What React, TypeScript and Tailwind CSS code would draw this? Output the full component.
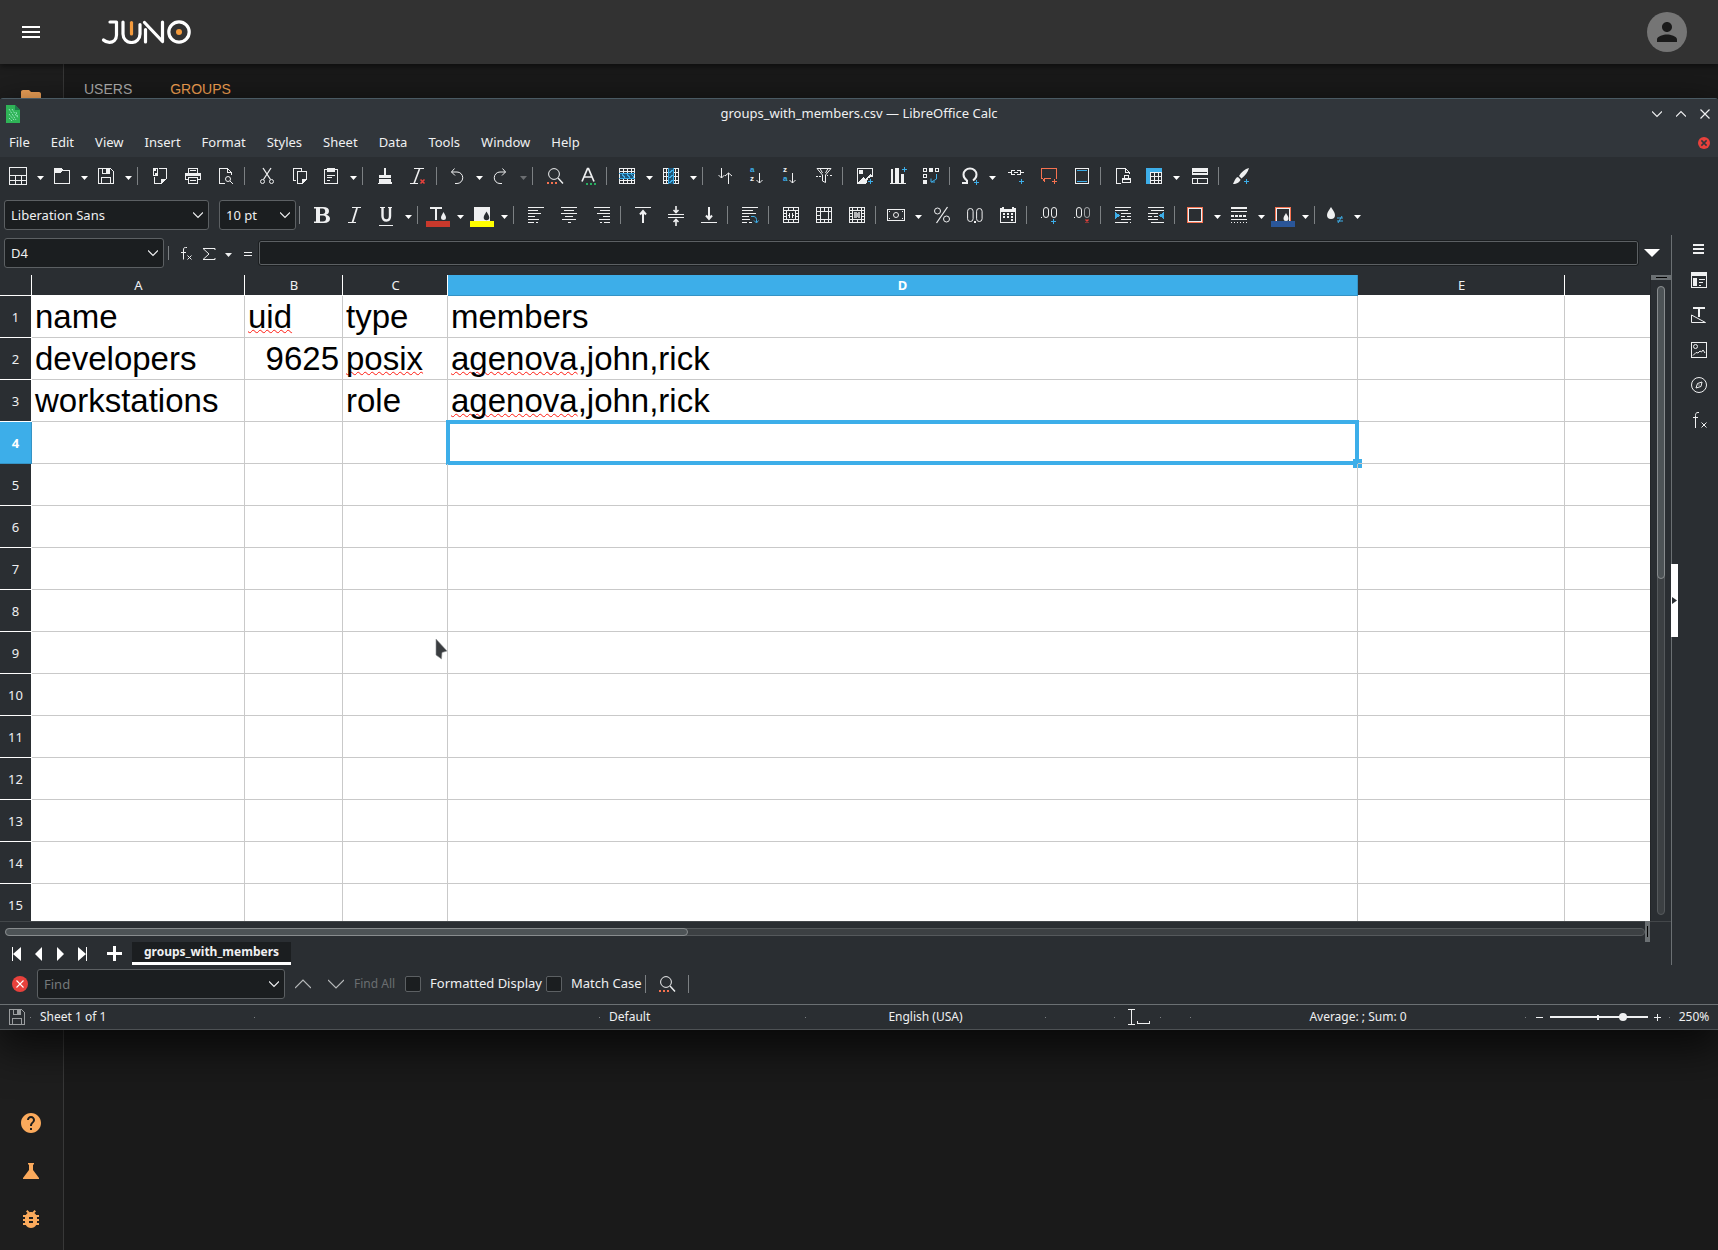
import type { ReactNode } from "react";
import { MdBugReport, MdFolder, MdHelp, MdMenu, MdPerson } from "react-icons/md";

const BLUE = "#3daee9";
const ORANGE = "#f67250";
const RED = "#e8413c";

//    Small blue "add" mark in the corner of an icon
const Plus = ({ x = 11, y = 11, color = BLUE }: { x?: number; y?: number; color?: string }) => (
  <path d={`M${x} ${y + 2.5}h5M${x + 2.5} ${y}v5`} stroke={color} fill="none" />
);

const Letter = ({ y, color, children }: { y: number; color: string; children: string }) => (
  <text x="0" y={y} fontSize="8" fontFamily="Liberation Sans" fontWeight="700" fill={color} stroke="none">
    {children}
  </text>
);

const icons: Record<string, ReactNode> = {
  new: <path d="M-.5-.5h17v17h-17zM-.5 7.5h17M-.5 12.5h17M5.5 7v9.500M11.500 7v9.500" />,
  open: (
    <>
      <path d="M0 0h7l2 2h7v1H8L6.500 5H0z" fill="currentColor" stroke="none" />
      <path d="M.5 4v11.500h15v-13" />
    </>
  ),
  save: (
    <>
      <path d="M.5.5h12l3 3v12H.5zM3.500 15.500v-6h9v6M4.500.5v5h7v-5" />
      <path d="M8 1h3v4H8z" fill="currentColor" stroke="none" />
    </>
  ),
  export: (
    <>
      <path d="M7 .5h7.500v10M2.500 9v6.500h7" />
      <path d="M9 16v-5h6zM1 0h5v8H1z" fill="currentColor" stroke="none" />
      <path d="M2 7l1-4 1 2 1-4" stroke="#2a2e32" />
    </>
  ),
  print: (
    <>
      <path d="M3.500 5V.5h9V5M3.500 11.500h-3v-6h15v6h-3M3.500 9.500h9v6h-9zM5 2.500h6M5 12.500h6" />
      <path d="M1 6h14v2H1z" fill="currentColor" stroke="none" />
    </>
  ),
  preview: (
    <>
      <path d="M7 15.500H1.500V.5h8l4 4V7M9.500.5v4h4" />
      <g shapeRendering="auto">
        <circle cx="10" cy="11" r="2.500" />
        <path d="M12 13l3 3" />
      </g>
    </>
  ),
  cut: (
    <g shapeRendering="auto">
      <path d="M4 0l7.500 11.500M12 0L4.500 11.500" strokeWidth="1.300" />
      <circle cx="3.500" cy="13.500" r="2" />
      <circle cx="12.500" cy="13.500" r="2" />
    </g>
  ),
  copy: (
    <>
      <path d="M3.500 12.500h-2V.5h8v2M5.500 3.500h9V11l-4 4.500h-5z" />
      <path d="M10 16v-5h5z" fill="currentColor" stroke="none" />
    </>
  ),
  paste: (
    <>
      <path d="M1.500 1.500h13v14h-13zM4 7.500h8M4 9.500h5M4 12.500h3" />
      <path d="M4 0h8v4H4z" fill="currentColor" stroke="none" />
    </>
  ),
  clone: <path d="M7 0h2v7h5v3H2V7h5zM2 11h12l1 5H1c1-1 1-3 1-5z" fill="currentColor" stroke="none" />,
  clear: (
    <>
      <path d="M4 .5h10M0 15.500h8" />
      <path d="M9.500 1L4 15.500" strokeWidth="1.600" shapeRendering="auto" />
      <path d="M10.500 11.500l4 4M14.500 11.500l-4 4" stroke={RED} strokeWidth="1.600" shapeRendering="auto" />
    </>
  ),
  undo: <path d="M5.500.5L2.500 4l3.500 3.500M2.500 4H8a5.700 5.700 0 0 1 0 11.500H6" shapeRendering="auto" />,
  redo: <path d="M9.500.5l3 3.500L9 7.500M12.500 4H7a5.700 5.700 0 0 0 0 11.500h2" shapeRendering="auto" />,
  find: (
    <>
      <g shapeRendering="auto">
        <circle cx="7" cy="6" r="5.400" />
        <path d="M11 10l5 5.500" strokeWidth="1.400" />
      </g>
      <path d="M0 15h2M4 15h2M8 15h2" stroke={ORANGE} strokeWidth="2" />
    </>
  ),
  spell: (
    <>
      <path d="M2 13.500L7.500.7h1l5.500 12.800M4 9h8" strokeWidth="1.700" shapeRendering="auto" />
      <path d="M6 15.500h2M10 15.500h2M14 15.500h2" stroke="#27ae60" strokeWidth="2" />
    </>
  ),
  row: (
    <>
      <path d="M.5.5h15v15H.5zM.5 3.500h15M.5 12.500h15M4.500 0v16M8.500 0v16M12.500 0v16" />
      <path d="M1 5h14v6H1z" fill="#1d5578" stroke="none" />
      <path d="M0 5.500h16M0 10.500h16M2 5l5 6M7 5l5 6M12 5l3 5" stroke={BLUE} />
    </>
  ),
  column: (
    <>
      <path d="M.5.5h15v15H.5zM3.500 0v16M12.500 0v16M0 4.500h16M0 8.500h16M0 12.500h16" />
      <path d="M5 0h6v16H5z" fill="#1d5578" stroke="none" />
      <path d="M5.500 0v16M10.500 0v16M5 6l6-5M5 11l6-5M5 16l6-5" stroke={BLUE} />
    </>
  ),
  sort: <path d="M4.500 0v10M1.500 7l3 3 3-3M11.500 16V5M8 8l3.500-3L15 8" shapeRendering="auto" />,
  sortAsc: (
    <>
      <path d="M9.500 5v10M6.500 12l3 3 3-3" shapeRendering="auto" />
      <Letter y={4} color={BLUE}>a</Letter>
      <Letter y={13} color="currentColor">z</Letter>
    </>
  ),
  sortDesc: (
    <>
      <path d="M9.500 5v10M6.500 12l3 3 3-3" shapeRendering="auto" />
      <Letter y={4} color="currentColor">z</Letter>
      <Letter y={13} color={BLUE}>a</Letter>
    </>
  ),
  filter: (
    <>
      <path d="M1 .500h14L9.500 7v7.500L6.500 13V7zM4 .500L6.500 5M12 .500L9.500 5" shapeRendering="auto" />
      <path d="M0 8.500h2M3 8.500h2M11 7.500h1M14 7.500h2" />
    </>
  ),
  image: (
    <>
      <path d="M9 15.500H.5V.5h15V9" />
      <path d="M2 2h4v4H2zM1 14l5-5 2 2 5-5 2 2v1l-4 1-1 5H1z" fill="currentColor" stroke="none" />
      <Plus />
    </>
  ),
  chart: (
    <>
      <path d="M1 1h2v14H1zM5 0h4v15H5zM11 6h3v9h-3z" fill="currentColor" stroke="none" />
      <path d="M0 15.500h16" />
      <Plus x={12} y={-1} />
    </>
  ),
  pivot: (
    <>
      <path d="M.5.5h3v3h-3zM12.500.5h3v3h-3zM.5 6.500h3v3h-3z" />
      <path d="M6 0h4v4H6zM0 12h4v4H0z" fill="currentColor" stroke="none" />
      <path d="M13.500 6v5l-5 3M8 10.500v3.500h4" stroke={BLUE} shapeRendering="auto" />
    </>
  ),
  omega: (
    <>
      <path d="M0 15h5v-2.500C2 10.500 1.500 8 1.500 6.500a6.500 6 0 0 1 13 0c0 1.500-.5 4-3.500 6" strokeWidth="2" shapeRendering="auto" />
      <Plus x={12} y={12} />
    </>
  ),
  link: (
    <>
      <path d="M0 4.500h3M6 4.500h4M13 4.500h3M6.500 3V2.500h-3v4h3V6M9.500 3V2.500h3v4h-3V6" />
      <Plus x={11} y={11} />
    </>
  ),
  comment: (
    <>
      <path d="M10 10.500H3.500V13L1.500 10.500H.5V.5h15v10H15" stroke={ORANGE} />
      <Plus color={ORANGE} />
    </>
  ),
  header: (
    <>
      <path d="M1.500.5h13v15h-13z" />
      <path d="M3 2.500h10M3 13.500h10" stroke={BLUE} />
    </>
  ),
  printArea: (
    <>
      <path d="M6 15.500H1.500V.5h9l4 4V6M10.500.5v4h4M9.500 10V7.500h4V10M7.500 10.500h8v4h-8z" />
      <path d="M8 10h7v2H8z" fill="currentColor" stroke="none" />
    </>
  ),
  freeze: (
    <>
      <path d="M4.500 4.500h11v11h-11zM8.500 4v12M12.500 4v12M4 8.500h12M4 12.500h12" />
      <path d="M0 0h16v4H4v12H0z" fill={BLUE} stroke="none" />
    </>
  ),
  split: (
    <>
      <path d="M.5 5.500h15M.5 4v3M15.500 4v3M5.500 5v2M.5 6.500h15M.5 10.500h15v5H.5zM5.500 10v6" />
      <path d="M0 0h16v4H0z" fill="currentColor" stroke="none" />
    </>
  ),
  draw: (
    <>
      <path d="M16 0c-4 1-8 4-10 8l2.500 2.500C12 8 15 4 16 0zM5 9c-2 0-3 3-5 7 4 0 7-2 7.500-4.500z" fill="currentColor" stroke="none" shapeRendering="auto" />
      <Plus />
    </>
  ),
  bold: (
    <path
      d="M0 0h9c4 0 6 1.500 6 4 0 2-1 3.200-3 3.800 2.500.4 4 2 4 4 0 2.700-2 4.200-6 4.200H0v-1.500h2v-13H0zM6 1.500V7h2.500c1.800 0 2.700-1 2.700-2.700s-.9-2.800-2.700-2.800zm0 7v6h3c2 0 3-1 3-3s-1-3-3-3z"
      fill="currentColor"
      fillRule="evenodd"
      stroke="none"
      shapeRendering="auto"
    />
  ),
  italic: (
    <>
      <path d="M5 .500h9M1 15.500h8" />
      <path d="M10 1L5.500 15.500" strokeWidth="1.800" shapeRendering="auto" />
    </>
  ),
  underline: (
    <>
      <path d="M4.500 0v9c0 3 1.500 4.500 4 4.500s3.500-1.500 3.500-4.500V0" strokeWidth="2.400" shapeRendering="auto" />
      <path d="M2 .500h5M10 .500h4M1 18.500h14" />
    </>
  ),
  fontColor: (
    <>
      <path d="M-4 14H20v6H-4z" fill="#c9392c" stroke="none" />
      <path d="M0 0h12v2H7v11H5V2H0z" fill="currentColor" stroke="none" />
      <path d="M13.500 5c1 2 2.500 4 2.500 5.500a2.500 2.500 0 0 1-5 0C11 9 12.500 7 13.500 5z" fill="currentColor" stroke="none" shapeRendering="auto" />
    </>
  ),
  fill: (
    <>
      <path d="M0 0h16v14H0z" fill="currentColor" stroke="none" />
      <path d="M-4 14H20v6H-4z" fill="#ffff00" stroke="none" />
      <path d="M12.500 4.500c1 2 2.800 4 2.800 6a2.800 2.800 0 0 1-5.600 0c0-2 1.800-4 2.800-6z" fill="#2a2e32" stroke="none" shapeRendering="auto" />
    </>
  ),
  alignLeft: <path d="M0 .5h16M0 3.500h10M0 6.500h13M0 9.500h7M0 12.500h11M0 15.500h6M8 15.500h2" />,
  alignCenter: <path d="M0 .5h16M3 3.500h10M0 6.500h16M4 9.500h8M1 12.500h14M7 15.500h3" />,
  alignRight: <path d="M0 .5h16M6 3.500h10M3 6.500h13M9 9.500h7M5 12.500h11M10 15.500h6M6 15.500h2" />,
  alignTop: (
    <>
      <path d="M0 .5h16" />
      <path d="M8 16V5M5 7.500L8 4l3 3.500" strokeWidth="2" shapeRendering="auto" />
    </>
  ),
  alignMiddle: (
    <>
      <path d="M0 7.500h16M0 10.500h16" />
      <path d="M8-1v6M8 19v-6M5.500 3L8 5.500 10.500 3M5.500 15L8 12.500l2.500 2.500" strokeWidth="1.600" shapeRendering="auto" />
    </>
  ),
  alignBottom: (
    <>
      <path d="M0 15.500h16" />
      <path d="M8 0v11M5 8.500L8 12l3-3.500" strokeWidth="2" shapeRendering="auto" />
    </>
  ),
  wrap: (
    <>
      <path d="M0 .5h16M0 3.500h11M0 6.500h14M0 9.500h7M0 12.500h8M0 15.500h5M7 15.500h3" />
      <path d="M9 9.500h3a3 3 0 0 1 2.500 3v3M12 13.500l2.500 2.500 2-2.500" stroke={BLUE} shapeRendering="auto" />
    </>
  ),
  merge: (
    <path d="M.5.5h15v15H.5zM0 3.500h16M0 12.500h16M3.500 3v10M12.500 3v10M5.500 0v4M10.500 0v4M5.500 12v4M10.500 12v4M0 6.500h4M0 9.500h4M12 6.500h4M12 9.500h4M5 8.500h2M9 8.500h2M6.500 6v5M9.500 6v5" />
  ),
  mergeCells: <path d="M.5.5h15v15H.5zM4.500 4.500h8v8h-8zM4.500 0v4M8.500 0v4M12.500 0v4M4.500 12v4M8.500 12v4M12.500 12v4M0 4.500h4M0 8.500h4M0 12.500h4M12 4.500h4M12 12.500h4" />,
  unmerge: (
    <>
      <path d="M.5.5h15v15H.5zM0 3.500h16M0 12.500h16M3.500 0v16M12.500 0v16M8.500 0v4M8.500 12v4M0 6.500h4M0 9.500h4M12 6.500h4M12 9.500h4" />
      <path d="M5 5h2l1 1 1-1h2v6H9l-1-1-1 1H5z" stroke="none" fill="currentColor" opacity=".7" />
    </>
  ),
  currency: (
    <>
      <rect x="-.5" y="2.500" width="17" height="11" rx="1" />
      <circle cx="8" cy="8" r="2.500" shapeRendering="auto" />
      <path d="M1 4.500h1M14 4.500h1M1 11.500h1M14 11.500h1" />
    </>
  ),
  percent: (
    <g shapeRendering="auto">
      <path d="M13.500 0L2.500 16" strokeWidth="1.300" />
      <circle cx="3.500" cy="4" r="3" />
      <circle cx="12.500" cy="12" r="3" />
    </g>
  ),
  number: (
    <>
      <rect x=".6" y="1.500" width="5.500" height="13" rx="2.700" shapeRendering="auto" />
      <rect x="9.600" y="1.500" width="5.500" height="13" rx="2.700" shapeRendering="auto" />
      <path d="M7 15h2" strokeWidth="2" />
    </>
  ),
  date: (
    <>
      <path d="M.5 2.500h15v13H.5z" />
      <path d="M0 1h2V0h2v2h8V0h2v1h2v4H0z" fill="currentColor" stroke="none" />
      <path d="M3 7h2M7 7h2M11 7h2M3 10h2M7 10h2M11 10h2M11 13h2" strokeWidth="2" />
    </>
  ),
  addDecimal: (
    <>
      <rect x="2.500" y=".5" width="5" height="10" rx="2.500" shapeRendering="auto" />
      <rect x="10.500" y=".5" width="5" height="10" rx="2.500" shapeRendering="auto" />
      <path d="M0 10.500h1" />
      <Plus x={10} y={12} />
    </>
  ),
  delDecimal: (
    <>
      <rect x="2.500" y=".5" width="5" height="10" rx="2.500" shapeRendering="auto" />
      <rect x="10.500" y=".5" width="5" height="10" rx="2.500" shapeRendering="auto" opacity=".6" />
      <path d="M0 10.500h1" />
      <path d="M11.500 12.500l3 3M14.500 12.500l-3 3" stroke={RED} strokeWidth="1.400" shapeRendering="auto" />
    </>
  ),
  indent: (
    <>
      <path d="M0 .5h16M0 3.500h13M6 6.500h10M6 9.500h4M12 9.500h4M6 12.500h10M0 15.500h13M15 15.500h1" />
      <path d="M0 5l5 3.500L0 12z" fill={BLUE} stroke="none" />
    </>
  ),
  outdent: (
    <>
      <path d="M0 .5h16M3 3.500h13M0 6.500h10M0 9.500h4M6 9.500h4M0 12.500h10M3 15.500h13" />
      <path d="M16 5l-5 3.500 5 3.500z" fill={BLUE} stroke="none" />
    </>
  ),
  borders: (
    <>
      <path d="M.5.5h15v15H.5z" stroke={ORANGE} />
      <path d="M1.500 1.500h13v13h-13z" />
    </>
  ),
  borderStyle: (
    <>
      <path d="M0 1h16" strokeWidth="2" />
      <path d="M0 4.500h16M0 12.500h16" />
      <path d="M0 9h16" strokeWidth="2" strokeDasharray="3 1" />
      <path d="M0 15.500h16" strokeDasharray="1 2" />
    </>
  ),
  borderColor: (
    <>
      <path d="M.5 14V.5h15V14" stroke={ORANGE} />
      <path d="M1.500 14V1.500h13V14" />
      <path d="M-4 14H20v6H-4z" fill="#2a5699" stroke="none" />
      <path d="M11 6c1 2 2.500 3.500 2.500 5.500a2.500 2.500 0 0 1-5 0C8.500 9.500 10 8 11 6z" fill="currentColor" stroke="none" shapeRendering="auto" />
    </>
  ),
  conditional: (
    <>
      <path d="M4 0c1.500 3 4 5 4 8a4 4 0 0 1-8 0c0-3 2.500-5 4-8z" fill="currentColor" stroke="none" shapeRendering="auto" />
      <path d="M10 11h6M10 14h6M15 9l-4 7" stroke={BLUE} shapeRendering="auto" />
    </>
  ),
  fx: <path d="M8 2.500H6.500C5 2.500 4.500 3 4.500 5v9.500M2 7.500h5M8.500 10.500l4 4M12.500 10.500l-4 4" shapeRendering="auto" />,
  sum: <path d="M14 5V3.500H2L8 9l-6 5.500h12V13" shapeRendering="auto" />,
  equals: <path d="M4 7.500h8M4 10.500h8" />,
  settings: <path d="M2 5h11M2 9h11M2 13h11" strokeWidth="1.800" />,
  properties: (
    <>
      <path d="M.5.5h15v15H.5zM8 7.500h6M8 10.500h4M8 13.500h2" />
      <path d="M0 0h16v4H0zM2 6h4v8H2z" fill="currentColor" stroke="none" />
    </>
  ),
  styles: (
    <>
      <path d="M2 1h12M8 1v9" strokeWidth="2" />
      <path d="M.5 8v7.500h14z" shapeRendering="auto" />
    </>
  ),
  gallery: (
    <>
      <path d="M.5.5h15v15H.5z" />
      <circle cx="4.500" cy="4.500" r="2" shapeRendering="auto" />
      <path d="M2 13.500l3-3 2 .500 2-2 1.500 1L12 8l2 3" shapeRendering="auto" />
    </>
  ),
  navigator: (
    <g shapeRendering="auto">
      <circle cx="8" cy="8" r="7.500" />
      <path d="M11 5l-1 4.500L5 11l1.500-4.500zM8 7.500v1" />
    </g>
  ),
  functions: <path d="M8 .5H7C5 .5 4.500 1.500 4.500 3.500V16M2 5.500h5M10.500 10.500l5 5M15.500 10.500l-5 5" shapeRendering="auto" />,
};

const Icon = ({ name }: { name: string }) => (
  <svg
    width="16"
    height="16"
    viewBox="0 0 16 16"
    fill="none"
    stroke="currentColor"
    shapeRendering="crispEdges"
    className="shrink-0 overflow-visible"
    aria-hidden="true"
  >
    {icons[name]}
  </svg>
);

const Chevron = ({ up = false, size = 10 }: { up?: boolean; size?: number }) => (
  <svg width={size} height={size} viewBox="0 0 10 10" fill="none" stroke="currentColor" className="shrink-0" aria-hidden="true">
    <path d={up ? "M0 7.500l5-5 5 5" : "M0 2.500l5 5 5-5"} vectorEffect="non-scaling-stroke" strokeWidth="1.200" />
  </svg>
);

const Caret = () => (
  <svg width="7" height="4" viewBox="0 0 7 4" fill="currentColor" aria-hidden="true">
    <path d="M0 0h7L3.500 4z" />
  </svg>
);

const Separator = () => <span className="ml-0.5 mr-[5px] h-[18px] w-px shrink-0 bg-[#7c8083]" />;

//    "|" is a separator, "+" after the name means a button with its own drop-down
const standardBar = [
  "new+", "open+", "save+", "|", "export", "print", "preview", "|", "cut", "copy", "paste+", "|", "clone", "clear", "|",
  "undo+", "redo+", "|", "find", "spell", "|", "row+", "column+", "|", "sort", "sortAsc", "sortDesc", "filter", "|",
  "image", "chart", "pivot", "|", "omega+", "link", "comment", "header", "|", "printArea", "freeze+", "split", "|", "draw",
];

const formattingBar = [
  "|", "bold", "italic", "underline+", "|", "fontColor+", "fill+", "|", "alignLeft", "alignCenter", "alignRight", "|",
  "alignTop", "alignMiddle", "alignBottom", "|", "wrap", "|", "merge", "mergeCells", "unmerge", "|",
  "currency+", "percent", "number", "date", "|", "addDecimal", "delDecimal", "|", "indent", "outdent", "|",
  "borders+", "borderStyle+", "borderColor+", "|", "conditional+",
];

const Tools = ({ items }: { items: string[] }) => (
  <>
    {items.map((item, i) => {
      if (item === "|") return <Separator key={i} />;
      const name = item.replace("+", "");
      if (!item.endsWith("+")) {
        return (
          <button key={i} aria-label={name} className="flex h-8 w-[33px] shrink-0 items-center justify-center">
            <Icon name={name} />
          </button>
        );
      }
      return (
        <div key={i} className="flex shrink-0">
          <button aria-label={name} className="flex h-8 w-[30px] items-center justify-center">
            <Icon name={name} />
          </button>
          <button
            aria-label={`${name} options`}
            className={`flex h-8 w-3.5 items-center justify-center pt-1 ${name === "redo" ? "text-[#6b6e71]" : "text-white"}`}
          >
            <Caret />
          </button>
        </div>
      );
    })}
  </>
);

const Select = ({ label, value, className }: { label: string; value: string; className: string }) => (
  <div className={`relative shrink-0 ${className}`}>
    <select
      aria-label={label}
      defaultValue={value}
      className="h-[30px] w-full appearance-none rounded-[3px] border border-[#5c6063] bg-[#1b1e20] pl-1.5 pt-0.5 text-[13px]"
    >
      <option>{value}</option>
    </select>
    <span className="pointer-events-none absolute right-1.5 top-[10px]">
      <Chevron />
    </span>
  </div>
);

const menus = ["File", "Edit", "View", "Insert", "Format", "Styles", "Sheet", "Data", "Tools", "Window", "Help"];

const CloseMark = ({ size }: { size: number }) => (
  <svg width={size} height={size} viewBox="0 0 16 16" aria-hidden="true">
    <circle cx="8" cy="8" r="8" fill={RED} />
    <path d="M4.500 4.500l7 7M11.500 4.500l-7 7" stroke={size > 12 ? "#fff" : "#31363b"} strokeWidth={size > 12 ? 1.1 : 2} />
  </svg>
);

const TitleBar = () => (
  <div className="bg-[#31363b]">
    <div className="grid h-[29px] grid-cols-[1fr_auto_1fr] items-center">
      <svg width="14" height="18" viewBox="0 0 14 18" className="ml-1.5" aria-hidden="true">
        <path d="M0 0h9l5 5v13H0z" fill="#2fb457" />
        <path d="M9 0l5 5H9z" fill="#1d7d4b" />
        <path d="M3 4l7 11M3 9l5 6M6 4l5 8M10 7l2 6M3 13l3 3" stroke="#8fe3b8" strokeDasharray="2 1" />
      </svg>
      <h1 className="text-[13px]">groups_with_members.csv — LibreOffice Calc</h1>
      <div className="flex justify-end gap-3.5 pr-2">
        <button aria-label="Minimize">
          <Chevron />
        </button>
        <button aria-label="Maximize">
          <Chevron up />
        </button>
        <button aria-label="Close">
          <svg width="10" height="10" viewBox="0 0 10 10" stroke="currentColor" strokeWidth="1.200" aria-hidden="true">
            <path d="M.5.5l9 9M9.500.5l-9 9" />
          </svg>
        </button>
      </div>
    </div>
    <nav className="flex h-[29px] items-center gap-[21px] pl-[9px] pr-2">
      {menus.map((menu) => (
        <button key={menu} className="text-[13px]">
          {menu}
        </button>
      ))}
      <button aria-label="Close document" className="ml-auto">
        <CloseMark size={12} />
      </button>
    </nav>
  </div>
);

const FormulaBar = () => (
  <div className="flex h-10 items-center pb-1 pl-1">
    <Select label="Name box" value="D4" className="w-40" />
    <span className="ml-1 h-3.5 w-px bg-[#7c8083]" />
    <button aria-label="Function wizard" className="ml-1.5 flex w-6 justify-center">
      <Icon name="fx" />
    </button>
    <button aria-label="Select function" className="flex w-5 justify-center">
      <Icon name="sum" />
    </button>
    <button aria-label="Function list" className="flex w-[18px] justify-center pt-1">
      <Caret />
    </button>
    <button aria-label="Formula" className="flex w-[22px] justify-center">
      <Icon name="equals" />
    </button>
    <input
      aria-label="Input line"
      className="h-6 min-w-0 flex-1 rounded-[2px] border border-[#5c6063] bg-[#1b1e20] px-1 text-[13px] outline outline-[#1b1e20]"
    />
    <button aria-label="Expand formula bar" className="flex w-[33px] pl-1.5">
      <svg width="16" height="8" viewBox="0 0 16 8" fill="#fff" aria-hidden="true">
        <path d="M0 0h16L8 8z" />
      </svg>
    </button>
  </div>
);

const columns = ["A", "B", "C", "D", "E", ""];
const active = { row: 4, column: "D" };

const Misspelled = ({ children }: { children: string }) => (
  <span className="underline decoration-[#ff1a10] decoration-wavy decoration-1 underline-offset-1 [text-decoration-skip-ink:none]">
    {children}
  </span>
);

const cells: Record<string, ReactNode> = {
  A1: "name",
  B1: <Misspelled>uid</Misspelled>,
  C1: "type",
  D1: "members",
  A2: "developers",
  B2: "9625",
  C2: <Misspelled>posix</Misspelled>,
  D2: <><Misspelled>agenova</Misspelled>,john,rick</>,
  A3: "workstations",
  C3: "role",
  D3: <><Misspelled>agenova</Misspelled>,john,rick</>,
};

const Sheet = () => (
  <div className="relative h-[646px] min-w-0 flex-1 overflow-hidden bg-white">
    <table className="w-full table-fixed border-separate border-spacing-0 text-black">
      <colgroup>
        <col className="w-8" />
        <col className="w-[213px]" />
        <col className="w-[98px]" />
        <col className="w-[105px]" />
        <col className="w-[910px]" />
        <col className="w-[207px]" />
        <col />
      </colgroup>
      <thead>
        <tr className="h-[21px] text-[13px] leading-5 text-[#eff0f1]">
          <td className="border-b border-r border-white bg-[#2a2e32] p-0"></td>
          {columns.map((column) => (
            <th
              key={column}
              scope="col"
              className={
                column === active.column
                  ? "border-b border-r border-[#3593c5] bg-[#3daee9] p-0 font-bold text-white"
                  : "border-b border-r border-white bg-[#2a2e32] p-0 pl-px font-normal last:border-r-0"
              }
            >
              {column}
            </th>
          ))}
        </tr>
      </thead>
      <tbody>
        {Array.from({ length: 15 }, (_, i) => i + 1).map((row) => (
          <tr key={row} className="h-[42px]">
            <th
              scope="row"
              className={
                row === active.row
                  ? "border-b border-r border-[#3593c5] bg-[#3daee9] p-0 pt-0.5 text-[13px] font-bold text-white"
                  : "border-b border-r border-white bg-[#2a2e32] p-0 pt-0.5 text-[13px] font-normal text-[#eff0f1]"
              }
            >
              {row}
            </th>
            {columns.map((column) => (
              <td
                key={column}
                className={`relative border-b border-r border-[#c9c9c9] px-[3px] py-0 font-['Liberation_Sans',Arial,sans-serif] text-[33px] leading-[40px] last:border-r-0 ${
                  column + row === "B2" ? "text-right" : ""
                }`}
              >
                {cells[column + row]}
                {row === active.row && column === active.column && (
                  <>
                    <span className="absolute -inset-0.5 border-4 border-[#3daee9]" />
                    <span className="absolute -bottom-[5px] -right-[5px] size-[9px] bg-[#3daee9]" />
                  </>
                )}
              </td>
            ))}
          </tr>
        ))}
      </tbody>
    </table>
    {/* Mouse pointer */}
    <svg width="14" height="24" viewBox="0 0 14 24" className="absolute left-[435px] top-[363px]" aria-hidden="true">
      <path d="M1 1l11 12-5 1.500L6.500 21 1 17z" fill="#3a3d40" stroke="#8f9294" strokeWidth=".6" />
    </svg>
  </div>
);

const VerticalScroll = () => (
  <div className="flex w-[21px] shrink-0 flex-col items-center border-l border-[#232629]">
    <div className="flex h-[5px] w-full items-center justify-center bg-[#6b7073]">
      <span className="h-px w-[11px] bg-black" />
    </div>
    <div className="mb-1.5 mt-1.5 w-2 flex-1 rounded-full border border-[#55595c] bg-[#3c4043]">
      <div className="-mx-px -mt-px h-[293px] rounded-full border border-[#888c8e] bg-[#4d5356]" />
    </div>
  </div>
);

const HorizontalScroll = () => (
  <div className="flex h-[21px] border-t border-[#43474a] pl-[5px] pr-[21px]">
    <div className="mt-1.5 h-2 flex-1 rounded-full border border-[#55595c] bg-[#3c4043]">
      <div className="-ml-px -mt-px h-2 w-5/12 rounded-full border border-[#888c8e] bg-[#4d5356]" />
    </div>
    <div className="-mt-px flex w-[5px] items-center justify-center bg-[#6b7073]">
      <span className="h-[11px] w-px bg-black" />
    </div>
  </div>
);

const sheetNav = [
  { label: "First sheet", d: "M4 7l8-7v14zM3 0h1v14H3z" },
  { label: "Previous sheet", d: "M4 7l7-7v14z" },
  { label: "Next sheet", d: "M11 7L4 0v14z" },
  { label: "Last sheet", d: "M11 7L3 0v14zM11 0h1v14h-1z" },
];

const SheetTabs = () => (
  <div className="flex h-[23px] items-center pl-[5px]">
    {sheetNav.map(({ label, d }) => (
      <button key={label} aria-label={label} className="flex w-[22px] justify-center">
        <svg width="15" height="14" viewBox="0 0 15 14" fill="#fff" aria-hidden="true">
          <path d={d} />
        </svg>
      </button>
    ))}
    <button aria-label="Add sheet" className="flex w-[39px] justify-center pl-1">
      <svg width="15" height="15" viewBox="0 0 15 15" fill="#fff" aria-hidden="true">
        <path d="M6 0h3v6h6v3H9v6H6V9H0V6h6z" />
      </svg>
    </button>
    <button className="h-full border-b-[3px] border-white bg-[#1b1e20] px-3 text-xs leading-5 font-bold">groups_with_members</button>
  </div>
);

const Sidebar = () => (
  <aside className="flex w-[47px] shrink-0 border-l border-[#6b7073]">
    <button aria-label="Hide sidebar" className="-ml-px mr-px flex h-[73px] w-[7px] items-center justify-center self-center bg-white">
      <svg width="5" height="7" viewBox="0 0 5 7" fill="#2a2e32" aria-hidden="true">
        <path d="M0 0l5 3.500L0 7z" />
      </svg>
    </button>
    <div className="flex flex-1 flex-col items-center pt-[3px]">
      <button aria-label="settings" className="flex h-6 items-center pb-1">
        <Icon name="settings" />
      </button>
      {["properties", "styles", "gallery", "navigator", "functions"].map((name) => (
        <button key={name} aria-label={name} className="flex h-[35px] items-center">
          <Icon name={name} />
        </button>
      ))}
    </div>
  </aside>
);

const Checkbox = ({ label }: { label: string }) => (
  <label className="flex items-center gap-[9px]">
    <input type="checkbox" className="size-4 appearance-none rounded-[2px] border border-[#5c6063] bg-[#1b1e20]" />
    {label}
  </label>
);

const FindBar = () => (
  <div className="flex h-[38px] items-center pl-3 text-[13px]">
    <button aria-label="Close find bar">
      <CloseMark size={16} />
    </button>
    <div className="relative ml-[9px] w-[248px]">
      <input
        aria-label="Find"
        placeholder="Find"
        className="h-[30px] w-full rounded-[3px] border border-[#5c6063] bg-[#1b1e20] px-1.5 placeholder:text-[#75797b]"
      />
      <span className="pointer-events-none absolute right-1.5 top-[10px]">
        <Chevron />
      </span>
    </div>
    <button aria-label="Find previous" className="ml-2.5 text-[#b8babc]">
      <Chevron up size={16} />
    </button>
    <button aria-label="Find next" className="ml-[17px] text-[#b8babc]">
      <Chevron size={16} />
    </button>
    <button disabled className="ml-2.5 mr-2.5 text-xs text-[#6b6e71]">
      Find All
    </button>
    <div className="flex gap-1">
      <Checkbox label="Formatted Display" />
      <Checkbox label="Match Case" />
    </div>
    <span className="ml-1 h-[18px] w-px bg-[#7c8083]" />
    <button aria-label="Find and replace" className="mx-[11px] p-0.5">
      <Icon name="find" />
    </button>
    <span className="h-[18px] w-px bg-[#7c8083]" />
  </div>
);

const Dot = () => <span className="size-px shrink-0 bg-[#7c8083]" />;

const StatusBar = () => (
  <footer className="mt-px flex h-[26px] items-center whitespace-nowrap border-y border-[#6b7073] border-b-[#4d5154] text-xs">
    <span className="w-[30px] pl-[9px] text-[#9a9d9f]">
      <Icon name="save" />
    </span>
    <Dot />
    <span className="w-[223px] pl-[9px]">Sheet 1 of 1</span>
    <Dot />
    <span className="w-[344px]" />
    <Dot />
    <span className="w-[205px] pl-[9px]">Default</span>
    <Dot />
    <span className="w-[239px] text-center">English (USA)</span>
    <Dot />
    <span className="w-[68px]" />
    <Dot />
    <span className="w-[45px] pl-[13px]">
      <svg width="22" height="16" viewBox="0 0 22 16" fill="none" stroke="currentColor" shapeRendering="crispEdges" aria-hidden="true">
        <path d="M0 .5h7M0 15.500h7M3.500 0v16M9.500 12v2.500h12V12" />
      </svg>
    </span>
    <Dot />
    <span className="w-[29px]" />
    <Dot />
    <span className="flex-1 text-center">Average: ; Sum: 0</span>
    <Dot />
    <div className="flex w-[143px] items-center pl-[10px]">
      <button aria-label="Zoom out" className="w-2">
        <span className="block h-px w-[7px] bg-current" />
      </button>
      <div className="relative ml-1.5 flex w-[98px] items-center">
        <span className="absolute left-[47px] h-[5px] w-0.5 bg-current" />
        <input
          type="range"
          aria-label="Zoom"
          defaultValue={77}
          className="relative h-4 w-full appearance-none bg-transparent [&::-webkit-slider-runnable-track]:h-0.5 [&::-webkit-slider-runnable-track]:bg-[#eff0f1] [&::-webkit-slider-thumb]:-mt-[3px] [&::-webkit-slider-thumb]:size-2 [&::-webkit-slider-thumb]:appearance-none [&::-webkit-slider-thumb]:rounded-full [&::-webkit-slider-thumb]:bg-[#eff0f1]"
        />
      </div>
      <button aria-label="Zoom in" className="ml-1.5">
        <svg width="7" height="7" viewBox="0 0 7 7" stroke="currentColor" shapeRendering="crispEdges" aria-hidden="true">
          <path d="M0 3.500h7M3.500 0v7" />
        </svg>
      </button>
    </div>
    <Dot />
    <button className="w-12 text-center">250%</button>
  </footer>
);

const CalcWindow = () => (
  <section className="absolute inset-x-0 top-[98px] rounded-t-[3px] border-t border-[#4a5a63] bg-[#2a2e32] font-['Noto_Sans',sans-serif] text-[#eff0f1] shadow-[0_14px_44px_4px_rgba(0,0,0,0.7)]">
    <TitleBar />
    <div className="flex h-[38px] items-center pl-[3px]">
      <Tools items={standardBar} />
    </div>
    <div className="flex h-10 items-center pl-1">
      <Select label="Font name" value="Liberation Sans" className="w-[205px]" />
      <Select label="Font size" value="10 pt" className="ml-2.5 mr-px w-[77px]" />
      <Tools items={formattingBar} />
    </div>
    <div className="flex">
      <div className="flex min-w-0 flex-1 flex-col">
        <FormulaBar />
        <div className="flex">
          <Sheet />
          <VerticalScroll />
        </div>
        <HorizontalScroll />
        <SheetTabs />
      </div>
      <Sidebar />
    </div>
    <FindBar />
    <StatusBar />
  </section>
);

const JunoLogo = () => (
  <svg width="90" height="24" viewBox="0 0 90 24" fill="none" stroke="#fff" strokeWidth="3.200" strokeLinecap="round" strokeLinejoin="round" role="img" aria-label="Juno">
    <path d="M9 2h6.500v13c0 5-3.500 7.300-7 7.300-2.500 0-4.500-.8-6-2.300" />
    <path d="M22 2v12a8.500 8.500 0 0 0 17 0V4.500" />
    <path d="M44.500 22V9.500M43.500 2.500L61.500 21.500V2" />
    <circle cx="78" cy="12" r="10.200" />
    <path d="M30.500 2.500V14" stroke="#f59b3c" />
    <circle cx="78" cy="12" r="3" fill="#f59b3c" stroke="none" />
  </svg>
);

const App = () => {
  return (
    <div className="relative flex min-h-screen flex-col overflow-hidden bg-[#1a1a1a] font-['Liberation_Sans',Arial,sans-serif]">
      <header className="relative z-10 flex h-16 items-center bg-[#323232] pl-[19px] pr-[31px] shadow-[0_2px_6px_rgba(0,0,0,0.5)]">
        <button aria-label="Menu" className="text-white">
          <MdMenu size={24} />
        </button>
        <a href="#home" className="ml-[58px]">
          <JunoLogo />
        </a>
        <button aria-label="Account" className="ml-auto flex size-10 items-center justify-center rounded-full bg-[#757575] text-[#1a1a1a]">
          <MdPerson size={30} />
        </button>
      </header>
      <div className="flex flex-1">
        <nav className="flex w-16 flex-col items-center justify-between border-r border-[#383838] bg-[#1e1e1e] pb-[19px] pr-px pt-[22px] text-[#fbaa5c]">
          <a href="#files" aria-label="Files">
            <MdFolder size={24} />
          </a>
          <div className="flex flex-col gap-6">
            <a href="#help" aria-label="Help">
              <MdHelp size={24} />
            </a>
            <a href="#labs" aria-label="Labs">
              <svg width="24" height="24" viewBox="0 0 24 24" fill="currentColor" aria-hidden="true">
                <path d="M9 4h6v1.500h-1V11l6 8v1H4v-1l6-8V5.500H9z" />
              </svg>
            </a>
            <a href="#bugs" aria-label="Report a bug">
              <MdBugReport size={24} />
            </a>
          </div>
        </nav>
        <main className="flex-1 pl-5 pt-[17px]">
          <div className="flex gap-[38px] text-sm leading-4">
            <a href="#users" className="text-[#b4b4b4]">
              USERS
            </a>
            <a href="#groups" className="text-[#fba654]">
              GROUPS
            </a>
          </div>
        </main>
      </div>
      <CalcWindow />
    </div>
  );
};

export default App;
